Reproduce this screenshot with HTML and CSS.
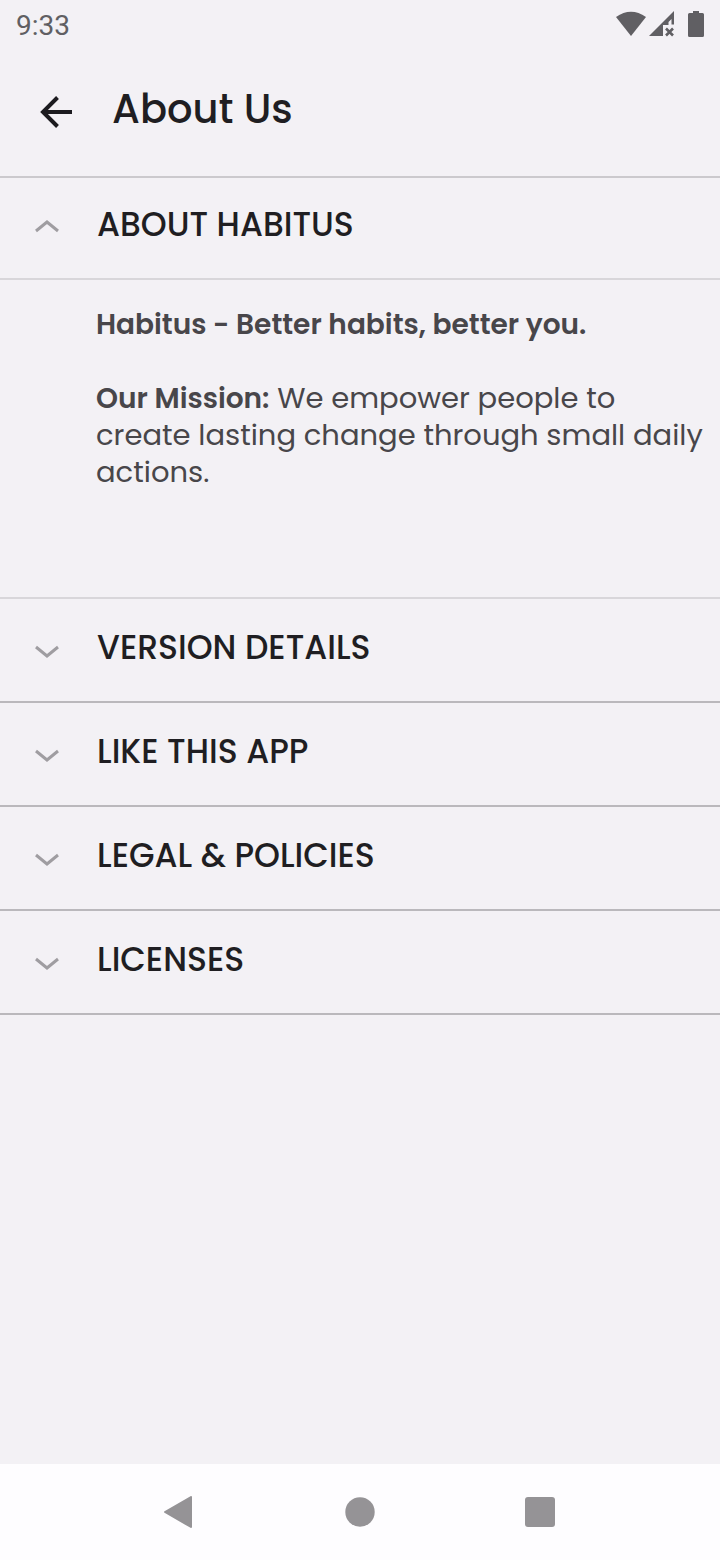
FILE: index.html
```html
<!DOCTYPE html>
<html lang="en">
<head>
  <meta charset="UTF-8">
  <meta name="viewport" content="width=device-width, initial-scale=1.0">
  <title>About Us - Habitus</title>
  <link rel="stylesheet" href="styles.css">
</head>
<body>
  <div class="status-bar">
    <span class="time">9:33</span>
    <div class="status-icons">
      <svg width="32" height="28" viewBox="0 0 32 28">
        <path d="M1 6 Q16 -4.500 31 6 L16 25 Z" fill="#605f63"/>
      </svg>
      <svg width="26" height="28" viewBox="0 0 26 28">
        <path d="M0 25 L25 0 V13.500 H22.500 V8 L19.500 11 V14 H14 V25 Z" fill="#605f63"/>
        <path d="M17 17.500 L24 24.500 M24 17.500 L17 24.500" stroke="#605f63" stroke-width="2.600"/>
      </svg>
      <svg class="battery" width="16" height="28" viewBox="0 0 16 28">
        <path d="M5 0 H11 V2 H14.500 Q16 2 16 3.500 V24.500 Q16 26 14.500 26 H1.500 Q0 26 0 24.500 V3.500 Q0 2 1.500 2 H5 Z" fill="#605f63"/>
      </svg>
    </div>
  </div>

  <header class="app-bar">
    <button type="button" class="back" aria-label="Back">
      <svg width="32" height="32" viewBox="0 0 32 32">
        <path d="M32 16 H3 M17.500 1.500 L3 16 L17.500 30.500" fill="none" stroke="#1c1b1f" stroke-width="4"/>
      </svg>
    </button>
    <h1>About Us</h1>
  </header>

  <main>
    <section class="item open">
      <h2>
        <button type="button" aria-expanded="true" aria-controls="about">
          <svg width="24" height="14" viewBox="0 0 24 14"><path d="M1 12 L12 3 L23 12" fill="none" stroke="#9f9da1" stroke-width="3"/></svg>
          ABOUT HABITUS
        </button>
      </h2>
      <div class="content" id="about">
        <p><strong>Habitus - Better habits, better you.</strong></p>
        <p><strong>Our Mission:</strong> We empower people to create lasting change through small daily actions.</p>
      </div>
    </section>

    <section class="item">
      <h2>
        <button type="button" aria-expanded="false">
          <svg width="24" height="14" viewBox="0 0 24 14"><path d="M1 2 L12 11 L23 2" fill="none" stroke="#9f9da1" stroke-width="3"/></svg>
          VERSION DETAILS
        </button>
      </h2>
    </section>

    <section class="item">
      <h2>
        <button type="button" aria-expanded="false">
          <svg width="24" height="14" viewBox="0 0 24 14"><path d="M1 2 L12 11 L23 2" fill="none" stroke="#9f9da1" stroke-width="3"/></svg>
          LIKE THIS APP
        </button>
      </h2>
    </section>

    <section class="item">
      <h2>
        <button type="button" aria-expanded="false">
          <svg width="24" height="14" viewBox="0 0 24 14"><path d="M1 2 L12 11 L23 2" fill="none" stroke="#9f9da1" stroke-width="3"/></svg>
          LEGAL &amp; POLICIES
        </button>
      </h2>
    </section>

    <section class="item">
      <h2>
        <button type="button" aria-expanded="false">
          <svg width="24" height="14" viewBox="0 0 24 14"><path d="M1 2 L12 11 L23 2" fill="none" stroke="#9f9da1" stroke-width="3"/></svg>
          LICENSES
        </button>
      </h2>
    </section>
  </main>

  <nav class="nav-bar">
    <button type="button" aria-label="Back">
      <svg width="32" height="32" viewBox="0 0 32 32">
        <path d="M27 1 V31 L1 16 Z" fill="#959396" stroke="#959396" stroke-width="2" stroke-linejoin="round"/>
      </svg>
    </button>
    <button type="button" aria-label="Home">
      <svg width="32" height="32" viewBox="0 0 32 32"><circle cx="16" cy="16" r="14.700" fill="#959396"/></svg>
    </button>
    <button type="button" aria-label="Recent apps">
      <svg width="32" height="32" viewBox="0 0 32 32"><rect x="1" y="1" width="30" height="30" rx="3" fill="#959396"/></svg>
    </button>
  </nav>
</body>
</html>
```
FILE: styles.css
```css
* {
  box-sizing: border-box;
}
body {
  margin: 0;
  min-height: 100vh;
  display: flex;
  flex-direction: column;
  background: #f3f1f5;
  color: #1f1e22;
  font-family: Poppins, Inter, sans-serif;
}
h1, h2, p {
  margin: 0;
}
button {
  padding: 0;
  border: none;
  background: none;
  color: inherit;
  font: inherit;
  cursor: pointer;
}
svg {
  display: block;
  flex: none;
}

.status-bar {
  display: flex;
  justify-content: space-between;
  align-items: center;
  height: 48px;
  padding: 2px 16px 0;
}
.time {
  font-family: Roboto, sans-serif;
  font-size: 28px;
  color: #605f63;
}
.status-icons {
  display: flex;
  gap: 2px;
}
.battery {
  margin-left: 11px;
}

.app-bar {
  display: flex;
  align-items: center;
  gap: 40px;
  height: 130px;
  padding: 0 40px;
  border-bottom: 2px solid #cbc9cd;
}
.app-bar h1 {
  font-size: 40px;
  line-height: 48px;
  font-weight: 500;
  padding-bottom: 6px;
}

main {
  flex: 1;
}
.item {
  border-bottom: 2px solid #bab8bc;
}
.item h2 {
  font-size: 33px;
  font-weight: 500;
}
.item h2 button {
  display: flex;
  align-items: center;
  gap: 38px;
  width: 100%;
  height: 102px;
  padding: 0 35px 4px;
  text-align: left;
}
.item svg {
  margin-top: 8px;
}
.item.open {
  border-bottom-color: #d8d6da;
}
.item.open h2 {
  border-bottom: 2px solid #d8d6da;
}
.item.open h2 button {
  height: 100px;
  padding-bottom: 6px;
}
.item.open svg {
  margin-top: 2px;
}
.content {
  padding: 26px 16px 106px 96px;
  font-size: 29px;
  line-height: 37px;
  color: #48464a;
}
.content p + p {
  margin-top: 37px;
}
.content strong {
  font-size: 28px;
  font-weight: 600;
}

.nav-bar {
  display: flex;
  justify-content: center;
  align-items: center;
  gap: 148px;
  height: 96px;
  background: #fefdff;
}
```
